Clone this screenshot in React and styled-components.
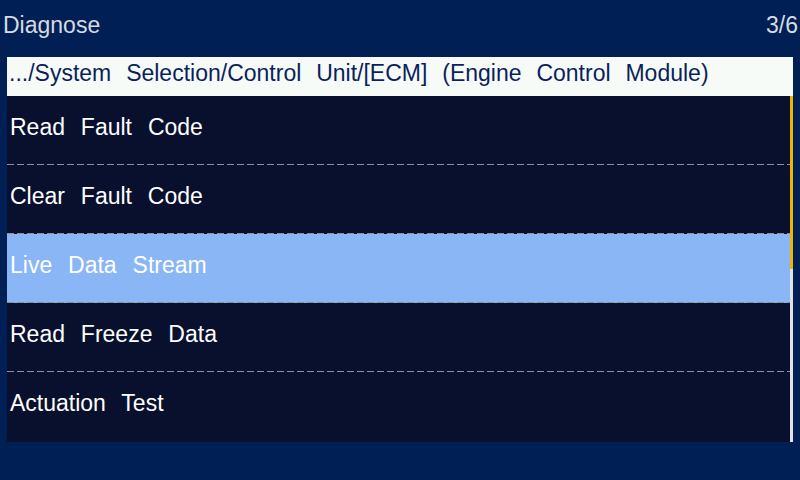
import React from "react"
import styled, { createGlobalStyle } from "styled-components"

const GlobalStyle = createGlobalStyle`
  html, body {
    margin: 0;
    padding: 0;
    background: #002055;
  }
  body {
    font-family: "Liberation Sans", Arial, sans-serif;
  }
`

const Screen = styled.div`
  width: 800px;
  height: 480px;
  background: #002055;
  display: flex;
  flex-direction: column;
  overflow: hidden;
`

const TitleBar = styled.header`
  height: 57px;
  display: flex;
  justify-content: space-between;
  align-items: flex-start;
  padding: 12px 2px 0 3px;
  box-sizing: border-box;
  color: #d6dbe2;
  font-size: 23px;
`

const Panel = styled.section`
  margin-left: 7px;
  width: 786px;
  display: flex;
  flex-direction: column;
`

const Breadcrumb = styled.div`
  height: 39px;
  background: #f6fbf8;
  color: #0c1f5c;
  font-size: 23px;
  word-spacing: 8.5px;
  padding: 0 0 7px 2px;
  box-sizing: border-box;
  display: flex;
  align-items: center;
  white-space: nowrap;
`

const ListArea = styled.div`
  display: flex;
  height: 346px;
`

const List = styled.ul`
  list-style: none;
  margin: 0;
  padding: 0;
  flex: 1;
  background: #08102e;
`

const dash = "repeating-linear-gradient(90deg, #8a90a0 0 7px, transparent 7px 10px)"

const Row = styled.li`
  height: 69px;
  box-sizing: border-box;
  display: flex;
  align-items: center;
  padding: 0 0 6px 3px;
  color: #ffffff;
  font-size: 23px;
  word-spacing: 9.5px;
  background-color: ${p => (p.$active ? "#8ab6f6" : "transparent")};
  background-image: ${p => (p.$last ? "none" : dash)};
  background-size: 100% 1px;
  background-position: left bottom;
  background-repeat: no-repeat;
`

const ScrollTrack = styled.div`
  width: 3px;
  background: #e2e2e2;
  display: flex;
  flex-direction: column;
`

const ScrollThumb = styled.div`
  height: 173px;
  background: #f0b400;
`

const items = [
  "Read Fault Code",
  "Clear Fault Code",
  "Live Data Stream",
  "Read Freeze Data",
  "Actuation Test",
]

export default function App() {
  return (
    <>
      <GlobalStyle />
      <Screen>
        <TitleBar>
          <span>Diagnose</span>
          <span>3/6</span>
        </TitleBar>
        <Panel>
          <Breadcrumb>.../System Selection/Control Unit/[ECM] (Engine Control Module)</Breadcrumb>
          <ListArea>
            <List>
              {items.map((label, i) => (
                <Row key={label} $active={i === 2} $last={i === items.length - 1}>
                  {label}
                </Row>
              ))}
            </List>
            <ScrollTrack>
              <ScrollThumb />
            </ScrollTrack>
          </ListArea>
        </Panel>
      </Screen>
    </>
  )
}
